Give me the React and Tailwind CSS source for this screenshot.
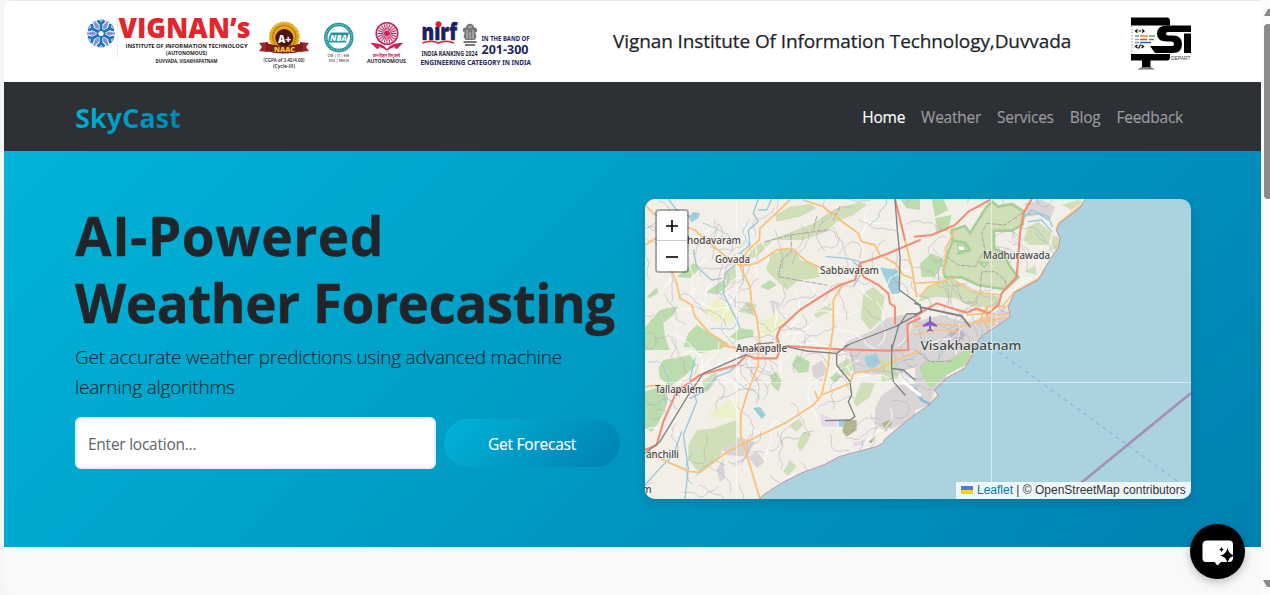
import React from "react";

const SANS = "font-['Open_Sans','Noto_Sans',sans-serif]";

const COAST =
  "L440.7 0L436.7 7.7L426.7 16L415.7 24L411.7 31L415.7 39L414 49L406.7 59L400 70L394 81L381.7 87.7L370 94L364 107.7L365.7 117.7L360 122.7L341.7 134L333 142.7L328 156L320 170L303 179L290 191L294 196L285 206L273 214L255 228L240 241L238 245L232 248L195 258L180 266L158 274L138 284L122 294L115 300";

function makeRandom(seed) {
  let s = seed;
  return () => {
    s = (s * 16807) % 2147483647;
    return s / 2147483647;
  };
}

// Winding minor tracks and streams that fill the countryside.
function makeTracks(seed, count, steps, step, spread) {
  const rnd = makeRandom(seed);
  const out = [];
  for (let i = 0; i < count; i++) {
    let x = rnd() * 410;
    let y = rnd() * 300;
    let a = rnd() * 6.28;
    let d = `M${x.toFixed(1)} ${y.toFixed(1)}`;
    for (let k = 0; k < steps; k++) {
      a += (rnd() - 0.5) * spread;
      x += Math.cos(a) * step;
      y += Math.sin(a) * step;
      d += `L${x.toFixed(1)} ${y.toFixed(1)}`;
    }
    out.push(d);
  }
  return out.join("");
}

const TRACKS = makeTracks(77, 190, 9, 4.5, 1.7);
const PALE_ROADS = makeTracks(501, 60, 8, 6, 1.3);
const STREAMS = makeTracks(913, 26, 9, 4, 1.5);

function RegionMap() {
  return (
    <svg viewBox="0 0 546 300" width="546" height="300" className="block" fill="none">
      <defs>
        <clipPath id="land">
          <path d={"M0 0" + COAST + "L0 300Z"} />
        </clipPath>
      </defs>
      <rect width="546" height="300" fill="#aad3df" />
      <path d={"M0 0" + COAST + "L0 300Z"} fill="#f2efe9" />
      <g clipPath="url(#land)" strokeLinejoin="round" strokeLinecap="round">
        {/* north-west */}
        <g transform="translate(-5 -9) scale(.33333)">
          <path fill="#d0dfb8" d="M312 212L350 165L430 135L520 100L580 60L660 35L680 45L640 75L590 95L560 125L490 150L400 150L350 200ZM405 75L450 50L510 42L530 55L480 80L410 95ZM378 240L390 195L430 178L470 180L480 210L530 225L540 260L470 275L440 300L400 262ZM252 250L285 225L290 270L262 290ZM670 310L700 290L735 320L722 390L690 420L662 385ZM520 370L570 340L580 360L530 385ZM295 365L320 335L350 345L340 375Z" />
          <path fill="#bcdcae" d="M110 260L160 220L185 230L150 265ZM200 305L250 270L262 290L230 312ZM20 320L50 292L55 308L30 325ZM15 410L60 360L115 348L100 375L70 400L75 440L90 480L15 480ZM130 470L145 430L170 405L205 425L265 460L240 480ZM270 440L300 415L340 420L340 440L290 450ZM360 290L390 270L410 285L385 300ZM780 27L840 27L840 60L800 55Z" />
          <path fill="#ecf1c9" d="M190 360L230 325L290 370L270 400L230 395ZM355 395L410 375L440 400L400 440L365 430Z" />
          <path fill="#d9d5d6" d="M700 420L740 385L790 375L840 370L840 480L610 480L620 455ZM390 330L420 340L400 375Z" />
          <path fill="#9fcfdc" d="M720 232L775 240L780 310L755 312ZM145 80L160 65L180 70L175 85L155 97Z" />
        </g>
        {/* north-east */}
        <g transform="translate(270 -9) scale(.33333)">
          <path fill="#bcdcae" d="M50 27L85 27L100 60L60 80ZM60 85L110 75L100 120L70 130ZM15 220L50 190L90 210L60 260L20 260Z" />
          <path fill="#d9d5d6" d="M0 395L80 375L160 400L230 370L270 350L285 380L200 440L180 480L0 480ZM330 40L380 30L420 50L405 90L370 75L335 80Z" />
          <path fill="#d0dfb8" d="M10 335L40 290L100 265L180 305L255 320L245 350L170 350L120 325L60 320ZM340 110L370 95L410 130L400 165L345 165L325 150ZM412 135L436 145L434 170L420 185L410 165ZM440 45L490 30L505 35L470 60ZM330 245L360 225L365 255Z" />
          <path fill="#beb9c8" d="M100 430L130 412L150 430L145 450L110 448Z" />
        </g>
        {/* south-west */}
        <g transform="translate(-5 146) scale(.33333)">
          <path fill="#bcdcae" d="M55 70L70 45L110 38L150 30L170 60L130 95L90 125L60 100ZM15 140L70 120L85 160L55 235L35 260L15 250ZM150 10L210 0L225 15L180 25ZM455 60L470 30L510 50L505 80L475 85ZM570 100L590 80L605 95L585 115ZM390 90L410 80L425 110L415 140L395 120Z" />
          <path fill="#d9d5d6" d="M245 310L290 275L345 290L320 335L260 330ZM515 65L545 45L560 70L545 110L520 95ZM625 0L840 0L840 60L760 90L640 80ZM705 190L725 150L770 120L840 115L840 205L780 240L735 260L705 235ZM325 335L350 320L375 350L350 370ZM230 375L250 340L255 400L240 410Z" />
          <path fill="#d0dfb8" d="M145 300L170 255L220 250L290 225L290 290L250 310L235 345L175 380L145 345ZM185 110L225 80L230 100L200 145ZM590 60L625 40L640 60L630 95L600 80ZM640 170L665 110L705 115L690 155L650 185ZM720 45L770 40L775 100L725 110ZM450 245L475 220L490 240L470 260ZM470 300L490 260L515 265L500 295L480 320ZM430 380L450 345L470 365L445 392Z" />
          <path fill="#ecf1c9" d="M205 205L270 165L300 170L290 220L215 220Z" />
          <path fill="#b5b58d" d="M612 225L650 225L650 255L620 275L607 260ZM725 235L755 222L755 240L735 255ZM685 290L705 275L695 295Z" />
          <path fill="#e8d9e8" d="M540 205L590 225L590 245L545 245ZM640 290L680 285L670 300L640 305Z" />
          <path fill="#9fcfdc" d="M675 35L710 25L720 55L700 70L678 60ZM340 190L360 185L378 210L365 222ZM595 225L615 225L612 245L597 245Z" />
        </g>
        <g transform="translate(270 146) scale(.33333)">
          <path fill="#d9d5d6" d="M0 0L175 0L175 30L150 72L100 100L60 135L45 180L0 225Z" />
          <path fill="#f2efe9" d="M90 95L100 80L150 58L150 70L105 98ZM0 195L45 180L0 218Z" />
          <path stroke="#8fbfd4" strokeWidth="9" d="M0 130L20 165L45 178" />
        </g>

        <path d={PALE_ROADS} stroke="#ffffff" strokeWidth="1.2" opacity=".7" />
        <path d={TRACKS} stroke="#b3a3b5" strokeWidth=".8" opacity=".6" />
        <path d={STREAMS} stroke="#8dc3d6" strokeWidth=".9" opacity=".8" />

        {/* forest reserve and headland */}
        <g transform="translate(270 -9) scale(.33333)">
          <path fill="#d0dfb8" stroke="#a6ce99" strokeWidth="8" d="M215 50L232 35L250 50L290 42L328 65L322 105L290 122L237 122L237 178L262 185L285 230L310 262L270 298L190 285L140 262L90 262L85 240L100 185L112 155L110 120L150 108L165 130L190 90Z" />
          <path stroke="#a6ce99" strokeWidth="9" d="M115 152L150 158L165 180L130 190" />
          <path fill="#fff" stroke="#a6ce99" strokeWidth="4" d="M128 165L150 168L148 182L130 182Z" />
          <path fill="#fff" stroke="#a6ce99" strokeWidth="6" d="M195 218L218 218L208 230Z" />
        </g>
        <g transform="translate(270 146) scale(.33333)">
          <path fill="#b9dba6" d="M15 75L30 45L90 50L140 20L175 15L150 60L95 90L50 128L35 118Z" />
          <path stroke="#a8a0a8" strokeWidth="3" strokeDasharray="10 5" d="M0 15L45 50L110 48" />
        </g>

        <g transform="translate(-5 -9) scale(.33333)">
          <path stroke="#96c8d9" strokeWidth="4" d="M85 27L110 60L150 80M355 27L340 70L355 95L325 120L330 165L300 190M160 180L170 230L215 270L245 265M285 225L255 250L250 310L290 390L300 415M640 215L670 240L640 290M395 27L380 60L355 60M560 200L620 205L660 215" />
          <path stroke="#a8a0a8" strokeWidth="3" strokeDasharray="14 6" d="M375 155L450 135L560 120M452 135L455 180L425 210L415 260L470 270L560 285M530 80L520 120M600 50L580 90" />
          <g stroke="#f9c27c" strokeWidth="5.500">
            <path d="M15 45L40 70L110 100L165 120L215 165L265 205L300 228L350 220L410 180L455 175L500 215L545 235M15 165L55 140M85 215L110 280L120 325L155 345L165 380L210 430L270 470L310 478M450 30L360 115L358 150L320 185L300 228L330 290L335 345L350 380L360 460M490 30L550 50L600 90L655 130L665 155L705 165L720 195L765 220L790 255L820 265M795 150L815 230L830 320M610 280L580 330L580 410L570 480" />
          </g>
          <path stroke="#f28f78" strokeWidth="6.500" d="M310 478L420 470L410 440L420 415L480 360L550 315L600 285L645 270L660 220L700 207L740 192L840 150M660 220L670 260L715 285L745 310L750 340L765 350L765 400M840 385L802 402L805 480M440 468L600 478L740 482L805 480M765 27L795 150" />
          <path stroke="#808080" strokeWidth="4" d="M765 27L772 120L780 200L778 300L840 345M350 462L400 458M615 468L700 435L765 410L840 370M840 370L800 372L775 410L755 480" />
        </g>
        <g transform="translate(270 -9) scale(.33333)">
          <path stroke="#96c8d9" strokeWidth="4" d="M320 90L350 60L400 80L412 110M340 95L380 90L410 125M330 75L370 70L400 90" />
          <path stroke="#a8a0a8" strokeWidth="3" strokeDasharray="12 6" d="M320 70L270 105L215 100L200 130L210 180L180 230L130 225L100 205M195 310L200 245L240 245L270 270L275 295" />
          <path stroke="#f9c27c" strokeWidth="5" d="M0 280L80 275L110 265L170 305L255 315M85 250L95 170L120 120M15 320L40 290L80 275M0 410L60 400L140 410L195 390L275 385M195 390L215 350L275 350L300 320L370 270M215 350L220 430M155 375L210 370L240 405M0 435L60 420L130 425M500 45L430 100L425 120L437 145L432 175L372 265L300 305L265 345M180 360L250 375L280 370M185 400L240 390" />
          <path stroke="#f28f78" strokeWidth="6.500" d="M0 140L50 135L120 105L160 65L225 30M350 27L325 70L315 130L305 260L260 310L250 345L220 370L185 355L155 368L110 355L65 340L30 360L0 380" />
          <path stroke="#808080" strokeWidth="5.500" d="M0 340L15 345L20 365L0 375M20 352L140 378L165 410" />
        </g>
        <g transform="translate(-5 146) scale(.33333)">
          <path stroke="#96c8d9" strokeWidth="4" d="M165 40L150 100L170 170L130 270L145 370L135 460M320 30L270 80L230 95L190 140L150 160M15 420L60 370L100 330L125 260M345 190L370 215" />
          <g stroke="#f9c27c" strokeWidth="5.500">
            <path d="M355 20L355 60L320 150L302 210L302 270L310 295L360 462M15 310L80 350L150 380L180 382L260 322L310 295L440 232L520 180L545 150L630 115L640 85L720 70L780 40L840 20M545 150L565 60L570 0M525 140L535 165M15 125L60 120M240 0L290 10" />
          </g>
          <path stroke="#f28f78" strokeWidth="6.500" d="M15 315L50 300L70 230L110 140L180 90L290 60L320 30L345 40L410 40L418 20" />
          <path stroke="#808080" strokeWidth="4" d="M15 325L60 290L145 150L190 85L320 28M440 5L500 18L590 25L625 0M590 25L590 60L630 110L635 150L625 170L645 215L630 225L557 227M755 0L755 70L760 110L795 150M755 70L790 75L825 105" />
          <path stroke="#fff" strokeWidth="9" d="M790 110L840 150" />
        </g>
        <path d={"M440.7 0" + COAST} stroke="#b39aa9" strokeWidth="2" />
      </g>
      <path d="M354 153L546 292" stroke="#8db9dc" strokeWidth="1.3" strokeDasharray="4 4" />
      <path d="M436 284L546 194" stroke="#a58fb4" strokeWidth="2.8" />
      <path d="M91.500 0V300M346.500 0V300M0 183.500H546" stroke="#fff" strokeWidth="1" opacity=".5" />
      <path d="M284 118v4l-6 4v2l6-1.500v3.500l-2 1.500v1l3-.8 3 .8v-1l-2-1.500v-3.500l6 1.500v-2l-6-4v-4q-1-2-2 0z" fill="#8461c4" />
      <g className="font-['Noto_Sans',sans-serif]" fill="#474747" stroke="#fff" strokeOpacity=".55" strokeWidth="1.6" paintOrder="stroke">
        <g fontSize="10.200" fontWeight="500">
          <text x="42" y="45" textLength="54" lengthAdjust="spacingAndGlyphs">hodavaram</text>
          <text x="70" y="64" textLength="35" lengthAdjust="spacingAndGlyphs">Govada</text>
          <text x="175" y="75" textLength="59" lengthAdjust="spacingAndGlyphs">Sabbavaram</text>
          <text x="338" y="60" textLength="67" lengthAdjust="spacingAndGlyphs">Madhurawada</text>
          <text x="91" y="153" textLength="51" lengthAdjust="spacingAndGlyphs">Anakapalle</text>
          <text x="10" y="194" textLength="49" lengthAdjust="spacingAndGlyphs">Tallapalem</text>
          <text x="1" y="258.500" textLength="33" lengthAdjust="spacingAndGlyphs">anchilli</text>
          <text x="-3" y="294">m</text>
        </g>
        <text x="275.500" y="150.500" fontSize="13" fontWeight="500" textLength="101" lengthAdjust="spacingAndGlyphs">Visakhapatnam</text>
      </g>
    </svg>
  );
}

function AccreditationLogos() {
  const spokes = Array.from({ length: 6 }, (_, i) => i * 60);
  const rays = Array.from({ length: 20 }, (_, i) => i * 18);
  return (
    <svg viewBox="85 10 450 64" width="450" height="64" className="block shrink-0 font-['Open_Sans',sans-serif]">
      {/* institute emblem */}
      <circle cx="101" cy="33.500" r="14" fill="#8b8fd0" />
      {spokes.map((a) => (
        <path key={a} d="M101 33.500V24.500L96.500 20M101 24.500L105.500 20" stroke="#fff" strokeWidth="4.200" fill="none" transform={`rotate(${a} 101 33.500)`} />
      ))}
      {spokes.map((a) => (
        <path key={a} d="M101 33.500V24L97.500 20.500M101 24L104.500 20.500" stroke="#1976b8" strokeWidth="2.800" fill="none" transform={`rotate(${a} 101 33.500)`} />
      ))}
      <circle cx="101" cy="33.500" r="3.400" fill="#fff" stroke="#1976b8" strokeWidth="1.600" />
      <path d="M117.500 18V58" stroke="#ddd" strokeWidth=".6" />
      <text x="118.500" y="38.200" fontSize="27.500" fontWeight="800" fill="#e3262c" textLength="132" lengthAdjust="spacingAndGlyphs">VIGNAN’s</text>
      <g fill="#222" fontWeight="700">
        <text x="125.500" y="48" fontSize="6" textLength="122" lengthAdjust="spacingAndGlyphs">INSTITUTE OF INFORMATION TECHNOLOGY</text>
        <text x="166" y="55.300" fontSize="4.800" textLength="41" lengthAdjust="spacingAndGlyphs">(AUTONOMOUS)</text>
        <text x="155.500" y="62.500" fontSize="4.500" textLength="62" lengthAdjust="spacingAndGlyphs">DUVVADA, VISAKHAPATNAM</text>
      </g>
      {/* NAAC seal */}
      <path d="M259 43L268 42V52L259 51L262 47ZM309 43L300 42V52L309 51L306 47Z" fill="#a3232b" />
      <circle cx="284.300" cy="37" r="14.500" fill="#e9a91c" stroke="#e9a91c" strokeWidth="2" strokeDasharray="2 1" />
      <circle cx="284.300" cy="37" r="11.500" fill="none" stroke="#a06a12" strokeWidth="1.600" strokeDasharray="1.200 .8" />
      <circle cx="284.300" cy="38" r="9" fill="#4c1412" />
      <path d="M266 43Q284 49 303 43V51Q284 56 266 51Z" fill="#7e1d1b" />
      <text x="284.500" y="43" fontSize="10" fontWeight="800" fill="#fff" textAnchor="middle">A+</text>
      <text x="274" y="52" fontSize="7.500" fontWeight="800" fill="#f5c52a" textLength="21" lengthAdjust="spacingAndGlyphs">NAAC</text>
      <g fill="#222" fontWeight="600" fontSize="4.800">
        <text x="263.500" y="61.700" textLength="41" lengthAdjust="spacingAndGlyphs">(CGPA of 3.40/4.00)</text>
        <text x="273" y="68" textLength="22" lengthAdjust="spacingAndGlyphs">(Cycle-III)</text>
      </g>
      {/* NBA seal */}
      <circle cx="338.800" cy="37.500" r="13" fill="none" stroke="#25939b" strokeWidth="3.500" />
      <circle cx="338.800" cy="37.500" r="13" fill="none" stroke="#a9d8da" strokeWidth="1" strokeDasharray="1.500 1.200" />
      <path d="M329 37L331 32.500H349L346 42.500H328Z" fill="#25939b" />
      <text x="330" y="41" fontSize="8.500" fontWeight="800" fontStyle="italic" fill="#fff" textLength="17" lengthAdjust="spacingAndGlyphs">NBA</text>
      <g fill="#444" fontWeight="600" fontSize="4">
        <text x="327.500" y="56.500" textLength="22" lengthAdjust="spacingAndGlyphs">CSE | IT | EEE</text>
        <text x="329" y="61.500" textLength="20" lengthAdjust="spacingAndGlyphs">ECE | MECH</text>
      </g>
      {/* UGC wheel */}
      <circle cx="387" cy="33.500" r="10.800" fill="#fbe9f0" stroke="#c2285f" strokeWidth="1.600" />
      {rays.map((a) => (
        <path key={a} d="M387 30V24" stroke="#c2285f" strokeWidth="1" transform={`rotate(${a} 387 33.500)`} />
      ))}
      <circle cx="387" cy="33.500" r="3" fill="#c2285f" />
      <path d="M370.500 43Q382 42 387 49Q392 42 403 43L397 49Q391 46 387 52Q383 46 377 49Z" fill="#c2285f" />
      <path d="M379 47l8 4 8-4" stroke="#fff" strokeWidth=".8" fill="none" />
      <text x="372.500" y="56.500" fontSize="4.600" fontWeight="700" fill="#c2285f" textLength="28" lengthAdjust="spacingAndGlyphs">ज्ञान-विज्ञान विमुक्तये</text>
      <text x="367" y="63" fontSize="5" fontWeight="700" fill="#222" textLength="39" lengthAdjust="spacingAndGlyphs">AUTONOMOUS</text>
      {/* NIRF */}
      <text x="421.500" y="40" fontSize="22" fontWeight="800" fill="#20205f" stroke="#20205f" strokeWidth=".5" textLength="35.500" lengthAdjust="spacingAndGlyphs">nırf</text>
      <circle cx="438.500" cy="24.300" r="3" fill="#d8232f" />
      <path d="M422.500 43Q431 39.500 438.500 43Q446 39.500 454 43" stroke="#d8232f" strokeWidth="1.600" fill="none" />
      {/* state emblem */}
      <g fill="#777">
        <circle cx="470" cy="28" r="4.200" />
        <circle cx="465.500" cy="30" r="2.600" />
        <circle cx="474.500" cy="30" r="2.600" />
        <path d="M465 31h10l1.500 6-2 3h-9l-2-3zM463.500 41h13v2h-13zM465 44h10v2h-10z" />
      </g>
      <path d="M467 30v9M470 32v7M473 30v9M468 27h4" stroke="#ddd" strokeWidth=".8" />
      <g fontWeight="700" fill="#23235f" className="font-['Noto_Sans',sans-serif]">
        <text x="481.500" y="41" fontSize="6.200" textLength="48" lengthAdjust="spacingAndGlyphs">IN THE BAND OF</text>
        <text x="481.500" y="53.600" fontSize="11.500" textLength="47" lengthAdjust="spacingAndGlyphs">201-300</text>
        <text x="421.500" y="56" fontSize="6.500" fill="#2b2b3f" textLength="56" lengthAdjust="spacingAndGlyphs">INDIA RANKING 2024</text>
        <text x="420.500" y="65.300" fontSize="6.700" textLength="110.500" lengthAdjust="spacingAndGlyphs">ENGINEERING CATEGORY IN INDIA</text>
      </g>
    </svg>
  );
}

function DepartmentLogo() {
  return (
    <svg viewBox="0 0 60 54" width="60" height="54" className="mt-1 block shrink-0">
      <path d="M0 .500H36Q39 .500 39 4V8.500H0ZM0 37H39V40Q39 43.500 36 43.500H0ZM11 43H19.500V50H11Z" fill="#000" />
      <path d="M6 52.500L11 50H20L24 52.500Z" fill="#777" />
      <path d="M1 9V37" stroke="#999" strokeWidth="1" strokeDasharray="1.500 1.500" />
      <path d="M6.500 12.500L4.500 14L6.500 15.500M11 12.500L13 14L11 15.500M7.500 14H10M6.500 28L4.500 29.500L6.500 31M10.500 28L12.500 29.500L10.500 31M9.500 27.500L7.500 31.500" stroke="#000" strokeWidth="1.200" fill="none" />
      <g strokeWidth="1.500">
        <path d="M4 19H8M4 25.500H8" stroke="#4fa3dc" />
        <path d="M9 19H17M4 22.500H8" stroke="#f28c28" />
        <path d="M18 19H24" stroke="#3fae6a" />
        <path d="M9 22.500H16M18 22.500H23" stroke="#e2483d" />
        <path d="M9 25.500H20" stroke="#2b5ea7" />
      </g>
      <path d="M60 8.500H36Q26 8.500 26 16.500Q26 24.500 36 24.500H40Q43 24.500 43 27Q43 29 40 29H19L24 36H42Q51 36 51 27Q51 18.500 42 18.500H37Q35 18.500 35 16.500Q35 15 37 15H60Z" fill="#000" />
      <path d="M53 16.500H60V36H53Z" fill="#000" />
      <text x="40" y="42.500" fontSize="5.600" fill="#444" textLength="19.500" lengthAdjust="spacingAndGlyphs" className="font-['Liberation_Sans',sans-serif]">DEPART</text>
    </svg>
  );
}

function Scrollbar() {
  return (
    <div className="flex w-[9px] shrink-0 flex-col items-end justify-between bg-[#fbfbfc] pt-[9px] pb-[7px]">
      <div className="flex w-[6px] flex-col overflow-hidden">
        <svg viewBox="0 0 6 7" width="6" height="7">
          <path d="M0 7L4 0H6V7Z" fill="#8a8a8a" />
        </svg>
        <div className="mt-[8px] h-[175px] w-[6px] rounded-l-[4px] bg-[#8b8b8b]" />
      </div>
      <svg viewBox="0 0 7 8" width="7" height="8">
        <path d="M0 0H7V7H4Z" fill="#8a8a8a" />
      </svg>
    </div>
  );
}

export default function App() {
  return (
    <div className={`relative flex h-[595px] w-[1270px] overflow-hidden bg-[#f5f5f6] pl-1 text-[#212529] ${SANS}`}>
      <div className="flex w-[1257px] shrink-0 flex-col overflow-hidden rounded-l-lg bg-[#f8f9fb]">
        <div className="flex h-[82px] shrink-0 items-center justify-between border-t border-[#e9e9eb] bg-white pr-[70px] pl-[81px]">
          <AccreditationLogos />
          <div className="mr-[60px] ml-[78px] flex-1 text-[19px] font-medium tracking-[-0.1px] whitespace-nowrap [-webkit-text-stroke:0.25px_#212529]">
            Vignan Institute Of Information Technology,Duvvada
          </div>
          <DepartmentLogo />
        </div>

        <nav className="flex h-[69px] shrink-0 items-center justify-between bg-[#2d3034] pr-[78px] pl-[71px]">
          <div className="bg-[linear-gradient(135deg,#00b4d8_10%,#0081b0_100%)] bg-clip-text pt-[3px] text-[27px] leading-[40px] font-bold text-transparent">
            SkyCast
          </div>
          <div className="flex gap-4 pt-[2px] text-[15.500px] tracking-[-0.25px] text-[#9b9ca0] [-webkit-text-stroke:0.15px]">
            <span className="text-white">Home</span>
            <span>Weather</span>
            <span>Services</span>
            <span>Blog</span>
            <span>Feedback</span>
          </div>
        </nav>

        <section className="flex h-[396px] shrink-0 gap-6 bg-[linear-gradient(135deg,#00b4d8_0%,#0081b0_100%)] pt-12 pr-[70px] pl-[71px]">
          <div className="w-[546px] shrink-0 pt-1">
            <h1 className="-mt-px text-[53px] leading-[67px] font-bold tracking-[-0.45px] whitespace-nowrap [-webkit-text-stroke:0.4px_#212529]">
              <span className="tracking-[0.6px]">AI-Powered</span>
              <br />
              Weather Forecasting
            </h1>
            <p className="mt-[6px] text-[19px] leading-[30px] font-light tracking-[-0.23px] whitespace-nowrap [-webkit-text-stroke:0.1px_#212529]">
              Get accurate weather predictions using advanced machine
              <br />
              learning algorithms
            </p>
            <div className="mt-[15px] flex items-center gap-2">
              <div className="flex h-[52px] w-[361px] items-center rounded-md border-2 border-[#dff3f9] bg-white pt-[4px] pl-[11px] text-[15.500px] tracking-[-0.25px] text-[#5f6469]">
                Enter location...
              </div>
              <button className="h-12 w-[176px] rounded-3xl bg-[linear-gradient(135deg,#00b4d8_0%,#0081b0_100%)] pt-[3px] text-[15.500px] tracking-[-0.25px] text-white [-webkit-text-stroke:0.15px]">
                Get Forecast
              </button>
            </div>
          </div>

          <div className="relative h-[300px] w-[546px] shrink-0 overflow-hidden rounded-[10px] shadow-[0_4px_12px_rgba(0,0,0,0.15)]">
            <RegionMap />
            <div className="absolute top-[10px] left-[10px] flex h-[64px] w-[34px] flex-col rounded border-2 border-black/30 bg-white bg-clip-padding text-black">
              <div className="flex flex-1 items-center justify-center border-b border-[#ccc]">
                <svg width="12" height="12" viewBox="0 0 12 12"><path d="M0 6H12M6 0V12" stroke="#000" strokeWidth="1.600" /></svg>
              </div>
              <div className="flex flex-1 items-center justify-center pt-px">
                <svg width="12" height="12" viewBox="0 0 12 12"><path d="M0 6H12" stroke="#000" strokeWidth="1.600" /></svg>
              </div>
            </div>
            <div className="absolute right-0 bottom-0 flex h-[17px] w-[235px] items-center bg-white/80 pb-px pl-[5px] font-['Liberation_Sans',sans-serif] text-[12px] whitespace-pre text-[#333]">
              <svg width="12" height="8" viewBox="0 0 12 8" className="mr-1">
                <path fill="#4C7BE1" d="M0 0h12v4H0z" />
                <path fill="#FFD500" d="M0 4h12v4H0z" />
              </svg>
              <span className="text-[#0078a8]">Leaflet</span>
              <span> | © OpenStreetMap contributors</span>
            </div>
          </div>
        </section>
      </div>
      <Scrollbar />

      <div className="absolute top-[524px] left-[1190px] flex h-[55px] w-[55px] items-center justify-center rounded-full bg-black shadow-[0_3px_10px_rgba(0,0,0,0.25)]">
        <svg width="34" height="28" viewBox="0 0 34 28">
          <path d="M6 2.500H28Q32 2.500 32 6.500V20Q32 24 28 24H20L16.500 27.500L13.500 24H5Q1.500 24 1.500 20V7Q1.500 2.500 6 2.500Z" fill="#fff" />
          <path d="M26.500 9.500Q27.500 16.500 34 17.500Q27.500 18.500 26.500 25.500Q25.500 18.500 19 17.500Q25.500 16.500 26.500 9.500Z" fill="#000" />
          <path d="M20.500 9Q21 11.200 23 11.500Q21 11.800 20.500 14Q20 11.800 18 11.500Q20 11.200 20.500 9Z" fill="#000" />
        </svg>
      </div>
    </div>
  );
}
